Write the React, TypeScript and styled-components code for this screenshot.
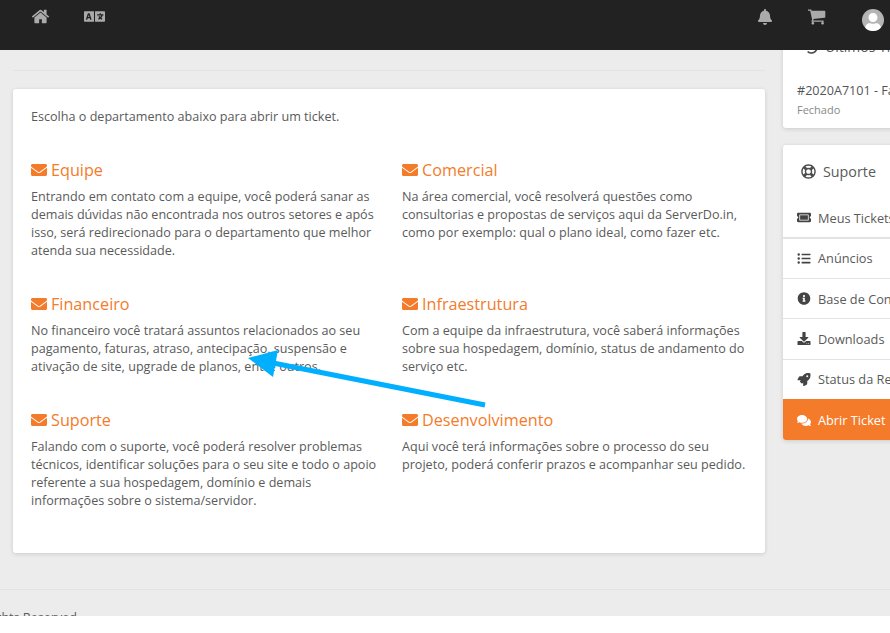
import React from "react";
import styled, { createGlobalStyle } from "styled-components";
import { FaLanguage, FaBell, FaEnvelope, FaRegLifeRing, FaTicketAlt, FaListUl, FaInfoCircle, FaDownload, FaRocket, FaComments, FaUser, FaHistory } from "react-icons/fa";

const Global = createGlobalStyle`
  html, body { margin: 0; padding: 0; background: #fff; }
  body { font-family: "Open Sans", "Noto Sans", sans-serif; font-size: 12.6px; color: #5a5a5a; }
  * { box-sizing: border-box; }
`;

const Page = styled.div`
  position: relative;
  width: 890px;
  height: 616px;
  overflow: hidden;
  background: #ececec;
`;

const Header = styled.header`
  position: absolute;
  top: 0;
  left: 0;
  right: 0;
  height: 50px;
  background: #222;
  color: #aaa;
  z-index: 5;
`;

const HeaderIcon = styled.span<{ $x: number; $y: number; $size: number }>`
  position: absolute;
  left: ${(p) => p.$x}px;
  top: ${(p) => p.$y}px;
  display: flex;
  font-size: ${(p) => p.$size}px;
  line-height: 0;
`;

const Avatar = styled.span`
  position: absolute;
  left: 862px;
  top: 9px;
  width: 22px;
  height: 22px;
  border-radius: 50%;
  background: #b5b5b5;
  color: #fff;
  overflow: hidden;
  display: flex;
  align-items: flex-end;
  justify-content: center;
  font-size: 18px;
  line-height: 0;
`;

const Layout = styled.div`
  display: grid;
  grid-template-columns: 752px 260px;
  column-gap: 18px;
  padding-left: 13px;
`;

const Main = styled.main`
  padding-top: 70px;
`;

const Rule = styled.div`
  border-top: 1px solid #e3e3e3;
  margin-bottom: 18px;
`;

const Card = styled.section`
  background: #fff;
  border-radius: 3px;
  box-shadow: 0 1px 4px rgba(0, 0, 0, 0.14);
`;

const TicketCard = styled(Card)`
  height: 464px;
  padding: 19px 18px 18px;
`;

const Intro = styled.p`
  margin: 0 0 33px;
  line-height: 18px;
`;

const Departments = styled.div`
  display: grid;
  grid-template-columns: 347px 345px;
  column-gap: 24px;
`;

const Department = styled.article`
  margin-bottom: 33px;
`;

const DeptTitle = styled.h3`
  display: flex;
  align-items: center;
  gap: 4px;
  margin: 0 0 7px;
  font-size: 16.2px;
  font-weight: 400;
  line-height: 22px;
  color: #f47b2a;
  svg { font-size: 16px; }
`;

const DeptText = styled.p`
  margin: 0;
  line-height: 18px;
`;

const Side = styled.aside`
  padding-top: 20px;
  white-space: nowrap;
`;

const LatestCard = styled(Card)`
  height: 108px;
  padding: 17px 14px;
  margin-bottom: 17px;
`;

const LatestTitle = styled.div`
  display: flex;
  align-items: center;
  gap: 7px;
  font-size: 14px;
  line-height: 20px;
  margin-bottom: 25px;
  padding-left: 8px;
  svg { font-size: 13px; color: #4d4d4d; }
`;

const LatestItem = styled.div`
  line-height: 18px;
  color: #555;
`;

const LatestStatus = styled.div`
  font-size: 11px;
  line-height: 20px;
  color: #888;
`;

const SupportCard = styled(Card)`
  height: 295px;
  overflow: hidden;
`;

const SupportTitle = styled.div`
  display: flex;
  align-items: center;
  gap: 7px;
  height: 53.4px;
  padding: 0 18px;
  font-size: 14.3px;
  svg { font-size: 15px; color: #4d4d4d; }
`;

const NavItem = styled.div<{ $active?: boolean; $thick?: boolean }>`
  display: flex;
  align-items: center;
  gap: 7px;
  height: ${(p) => (p.$active ? "41.3px" : "40.3px")};
  margin-top: ${(p) => (p.$active ? "-1px" : "0")};
  padding: ${(p) => (p.$active ? "1px 14px 0" : "0 14px")};
  font-size: 12.75px;
  color: ${(p) => (p.$active ? "#fff" : "#5a5a5a")};
  background: ${(p) => (p.$active ? "#f47b2a" : "transparent")};
  border-bottom: ${(p) => (p.$active ? "0" : p.$thick ? "2px solid #e3e3e3" : "1px solid #e3e3e3")};
  svg { width: 14px; font-size: 13px; color: ${(p) => (p.$active ? "#fff" : "#444")}; flex: none; }
`;

const Footer = styled.footer`
  margin-top: 36px;
  border-top: 1px solid #e2e2e2;
  padding-top: 19px;
  line-height: 18px;
  white-space: nowrap;
`;

const FooterText = styled.div`
  margin-left: -34px;
`;

const Arrow = styled.svg`
  position: absolute;
  left: 0;
  top: 0;
  z-index: 3;
  pointer-events: none;
`;

const departments = [
  { title: "Equipe", text: "Entrando em contato com a equipe, você poderá sanar as demais dúvidas não encontrada nos outros setores e após isso, será redirecionado para o departamento que melhor atenda sua necessidade." },
  { title: "Comercial", text: "Na área comercial, você resolverá questões como consultorias e propostas de serviços aqui da ServerDo.in, como por exemplo: qual o plano ideal, como fazer etc." },
  { title: "Financeiro", text: "No financeiro você tratará assuntos relacionados ao seu pagamento, faturas, atraso, antecipação, suspensão e ativação de site, upgrade de planos, entre outros." },
  { title: "Infraestrutura", text: "Com a equipe da infraestrutura, você saberá informações sobre sua hospedagem, domínio, status de andamento do serviço etc." },
  { title: "Suporte", text: "Falando com o suporte, você poderá resolver problemas técnicos, identificar soluções para o seu site e todo o apoio referente a sua hospedagem, domínio e demais informações sobre o sistema/servidor." },
  { title: "Desenvolvimento", text: "Aqui você terá informações sobre o processo do seu projeto, poderá conferir prazos e acompanhar seu pedido." },
];

const nav = [
  { icon: <FaTicketAlt />, label: "Meus Tickets", thick: true },
  { icon: <FaListUl />, label: "Anúncios" },
  { icon: <FaInfoCircle />, label: "Base de Conhecimento" },
  { icon: <FaDownload />, label: "Downloads" },
  { icon: <FaRocket />, label: "Status da Rede" },
  { icon: <FaComments />, label: "Abrir Ticket", active: true },
];

const HomeIcon = () => (
  <svg width="19" height="19" viewBox="0 0 1792 1792" fill="currentColor">
    <path d="M1472 992v480q0 26-19 45t-45 19h-384v-384h-256v384h-384q-26 0-45-19t-19-45v-480q0-1 .5-3t.5-3l575-474 575 474q1 2 1 6zm223-69l-62 74q-8 9-21 11h-3q-13 0-21-7l-692-577-692 577q-12 8-24 7-13-2-21-11l-62-74q-8-10-7-23.500t11-21.500l719-599q32-26 76-26t76 26l244 204v-195q0-14 9-23t23-9h192q14 0 23 9t9 23v408l219 182q10 8 11 21.500t-7 23.500z" />
  </svg>
);

const CartIcon = () => (
  <svg width="18" height="18" viewBox="128 128 1664 1664" fill="currentColor">
    <path d="M704 1536q0 52-38 90t-90 38-90-38-38-90 38-90 90-38 90 38 38 90zm896 0q0 52-38 90t-90 38-90-38-38-90 38-90 90-38 90 38 38 90zm128-1088v512q0 24-16.500 42.500t-40.500 21.500l-1044 122q13 60 13 70 0 16-24 64h920q26 0 45 19t19 45-19 45-45 19h-1024q-26 0-45-19t-19-45q0-11 8-31.500t16-36 21.500-40 15.500-29.500l-177-823h-204q-26 0-45-19t-19-45 19-45 45-19h256q16 0 28.500 6.500t19.500 15.500 13 24.500 8 26 5.500 29.500 4.500 26h1201q26 0 45 19t19 45z" />
  </svg>
);

export default function App() {
  return (
    <Page>
      <Global />
      <Header>
        <HeaderIcon $x={31} $y={7} $size={19}><HomeIcon /></HeaderIcon>
        <HeaderIcon $x={84} $y={6} $size={21}><FaLanguage /></HeaderIcon>
        <HeaderIcon $x={757} $y={9} $size={16}><FaBell /></HeaderIcon>
        <HeaderIcon $x={808} $y={8} $size={18}><CartIcon /></HeaderIcon>
        <Avatar><FaUser /></Avatar>
      </Header>
      <Layout>
        <Main>
          <Rule />
          <TicketCard>
            <Intro>Escolha o departamento abaixo para abrir um ticket.</Intro>
            <Departments>
              {departments.map((d) => (
                <Department key={d.title}>
                  <DeptTitle><FaEnvelope />{d.title}</DeptTitle>
                  <DeptText>{d.text}</DeptText>
                </Department>
              ))}
            </Departments>
          </TicketCard>
        </Main>
        <Side>
          <LatestCard>
            <LatestTitle><FaHistory />Últimos Tickets</LatestTitle>
            <LatestItem>#2020A7101 - Fatura</LatestItem>
            <LatestStatus>Fechado</LatestStatus>
          </LatestCard>
          <SupportCard>
            <SupportTitle><FaRegLifeRing />Suporte</SupportTitle>
            {nav.map((n) => (
              <NavItem key={n.label} $active={n.active} $thick={n.thick}>{n.icon}{n.label}</NavItem>
            ))}
          </SupportCard>
        </Side>
      </Layout>
      <Footer><FooterText>All Rights Reserved</FooterText></Footer>
      <Arrow width="890" height="616" viewBox="0 0 890 616">
        <line x1="485" y1="405" x2="268" y2="362" stroke="#00b0ff" strokeWidth="5" />
        <polygon points="248,358 278,350 273,377" fill="#00b0ff" />
      </Arrow>
    </Page>
  );
}
